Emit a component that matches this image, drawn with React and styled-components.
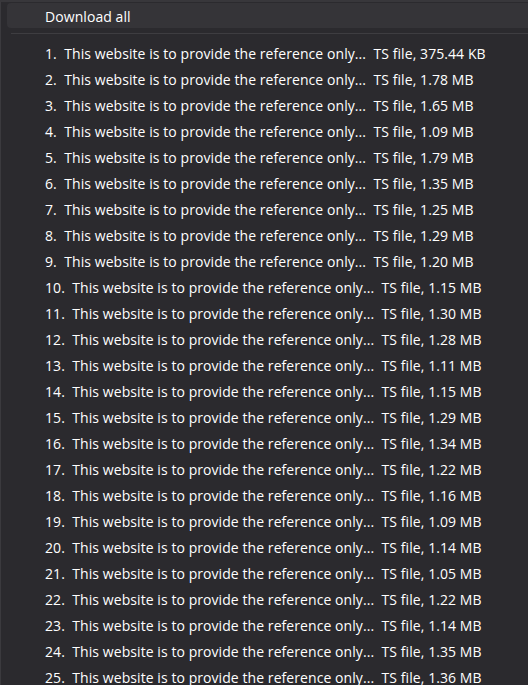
import React from "react";
import styled, { createGlobalStyle } from "styled-components";

const Global = createGlobalStyle`
  html, body { margin: 0; padding: 0; background: #2b2a2e; }
  body { width: 528px; height: 685px; overflow: hidden; }
`;

const Menu = styled.div`
  box-sizing: border-box;
  width: 528px;
  height: 685px;
  background: #2b2a2e;
  border-left: 1px solid #3b3a3e;
  border-top: 2px solid #38373b;
  padding: 1px 0 0 6px;
  font-family: "Open Sans", "Noto Sans", sans-serif;
  font-size: 14px;
  letter-spacing: 0.07px;
  color: #ffffff;
  overflow: hidden;
`;

const Item = styled.div`
  box-sizing: border-box;
  height: ${(p) => (p.$header ? 25 : 26)}px;
  display: flex;
  align-items: center;
  padding-left: 38px;
  padding-top: 2px;
  border-radius: 4px;
  background: ${(p) => (p.$active ? "#353438" : "transparent")};
  white-space: pre;
  margin-right: -10px;
`;

const Separator = styled.div`
  height: 1px;
  background: #3e3d41;
  margin: 5px 0 5px 4px;
`;

const sizes = [
  "375.44 KB", "1.78 MB", "1.65 MB", "1.09 MB", "1.79 MB", "1.35 MB", "1.25 MB",
  "1.29 MB", "1.20 MB", "1.15 MB", "1.30 MB", "1.28 MB", "1.11 MB", "1.15 MB",
  "1.29 MB", "1.34 MB", "1.22 MB", "1.16 MB", "1.09 MB", "1.14 MB", "1.05 MB",
  "1.22 MB", "1.14 MB", "1.35 MB", "1.36 MB",
];

export default function App() {
  return (
    <>
      <Global />
      <Menu>
        <Item $header $active>Download all</Item>
        <Separator />
        {sizes.map((s, i) => (
          <Item key={i}>
            {`${i + 1}.  This website is to provide the reference only...  TS file, ${s}`}
          </Item>
        ))}
      </Menu>
    </>
  );
}
